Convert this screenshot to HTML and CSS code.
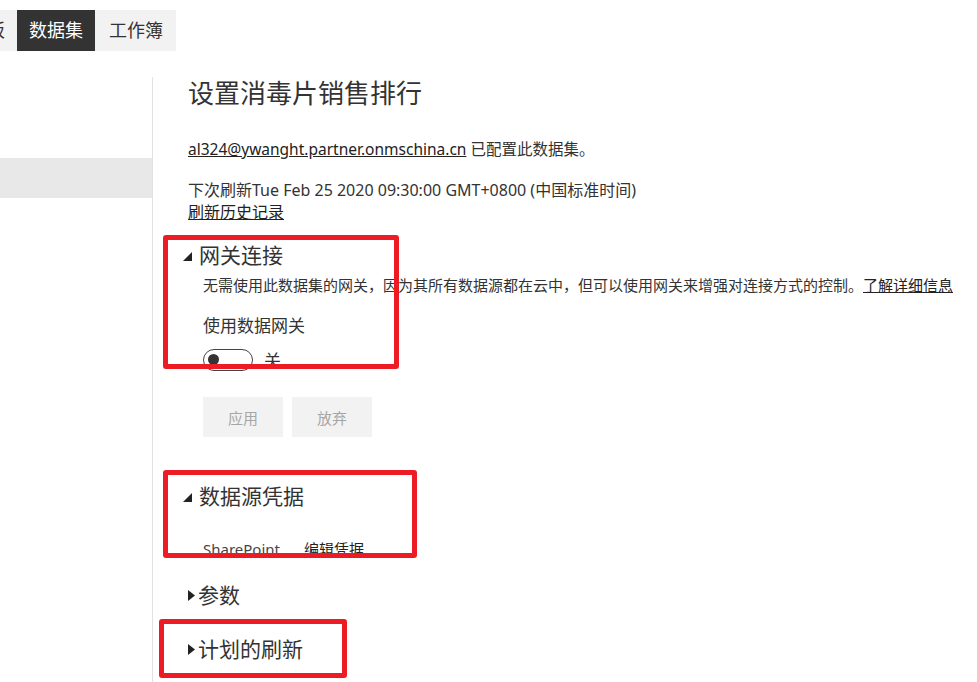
FILE: index.html
```html
<!DOCTYPE html>
<html lang="zh-CN">
<head>
    <meta charset="UTF-8">
    <meta name="viewport" content="width=device-width, initial-scale=1.0">
    <title>设置消毒片销售排行</title>
    <link rel="stylesheet" href="styles.css">
</head>
<body>
    <div class="tabs">
        <div class="tab tab-cut">仪表板</div>
        <div class="tab active">数据集</div>
        <div class="tab">工作簿</div>
    </div>
    <div class="main">
        <div class="sidebar">
            <div class="side-item selected"></div>
        </div>
        <div class="content">
            <h1 class="title">设置消毒片销售排行</h1>
            <p class="owner"><a href="#">al324@ywanght.partner.onmschina.cn</a> 已配置此数据集。</p>
            <p class="next-refresh">下次刷新Tue Feb 25 2020 09:30:00 GMT+0800 (中国标准时间)</p>
            <a class="history" href="#">刷新历史记录</a>

            <div class="section gateway">
                <div class="section-head">
                    <svg class="tri-open" width="9" height="9" viewBox="0 0 9 9"><polygon points="9,0 9,9 0,9" fill="#222"/></svg>
                    <span>网关连接</span>
                </div>
                <div class="section-body">
                    <p class="desc">无需使用此数据集的网关，因为其所有数据源都在云中，但可以使用网关来增强对连接方式的控制。<a href="#">了解详细信息</a></p>
                    <div class="label">使用数据网关</div>
                    <div class="toggle-row">
                        <span class="toggle"><span class="knob"></span></span>
                        <span class="toggle-text">关</span>
                    </div>
                    <div class="buttons">
                        <button class="btn" disabled>应用</button>
                        <button class="btn" disabled>放弃</button>
                    </div>
                </div>
            </div>

            <div class="section creds">
                <div class="section-head">
                    <svg class="tri-open" width="9" height="9" viewBox="0 0 9 9"><polygon points="9,0 9,9 0,9" fill="#222"/></svg>
                    <span>数据源凭据</span>
                </div>
                <div class="section-body">
                    <div class="cred-row">
                        <span class="cred-name">SharePoint</span>
                        <a href="#">编辑凭据</a>
                    </div>
                </div>
            </div>

            <div class="section params">
                <div class="section-head">
                    <svg class="tri-closed" width="7" height="11" viewBox="0 0 7 11"><polygon points="0,0 7,5.5 0,11" fill="#222"/></svg>
                    <span>参数</span>
                </div>
            </div>

            <div class="section schedule">
                <div class="section-head">
                    <svg class="tri-closed" width="7" height="11" viewBox="0 0 7 11"><polygon points="0,0 7,5.5 0,11" fill="#222"/></svg>
                    <span>计划的刷新</span>
                </div>
            </div>
        </div>
    </div>

    <div class="mark mark-gateway"></div>
    <div class="mark mark-creds"></div>
    <div class="mark mark-schedule"></div>
</body>
</html>
```

FILE: styles.css
```css
body {
    margin: 0;
    font-family: "Noto Sans", "Noto Sans CJK SC", sans-serif;
    color: #333;
    background-color: white;
    overflow: hidden;
}
a {
    color: #222;
    text-decoration: underline;
}
p {
    margin: 0;
}
.tabs {
    display: flex;
    padding-top: 10px;
    overflow: hidden;
}
.tab {
    height: 41px;
    line-height: 41px;
    padding: 0 12px;
    font-size: 18px;
    background-color: #f2f2f2;
    color: #333;
}
.tab-cut {
    margin-left: -61px;
}
.tab.active {
    background-color: #333;
    color: white;
}
.tab:last-child {
    padding: 0 13px 0 14px;
}
.main {
    display: flex;
    margin-top: 26px;
    min-height: 605px;
}
.sidebar {
    width: 152px;
    border-right: 1px solid #e1e1e1;
    flex-shrink: 0;
}
.side-item {
    height: 40px;
}
.side-item.selected {
    margin-top: 81px;
    background-color: #e8e8e8;
}
.content {
    padding-left: 35px;
    font-size: 15px;
}
.title {
    margin: 0;
    font-size: 26px;
    line-height: 32px;
    font-weight: normal;
    color: #333;
}
.owner {
    margin-top: 29px;
    line-height: 22px;
    font-size: 15.5px;
}
.next-refresh {
    margin-top: 19px;
    line-height: 22px;
    font-size: 16px;
}
.history {
    display: inline-block;
    line-height: 22px;
    font-size: 16px;
}
.section-head {
    display: flex;
    align-items: center;
    font-size: 21px;
    line-height: 28px;
    color: #333;
}
.tri-open {
    margin-left: -5px;
    margin-right: 7px;
    margin-top: 2px;
}
.tri-closed {
    margin-right: 3px;
}
.section-body {
    padding-left: 15px;
}
.gateway {
    margin-top: 18px;
}
.desc {
    margin-top: 5px;
    line-height: 22px;
    white-space: nowrap;
}
.label {
    margin-top: 18px;
    font-size: 17px;
    line-height: 24px;
}
.toggle-row {
    display: flex;
    align-items: center;
    gap: 11px;
    margin-top: 9px;
}
.toggle {
    display: flex;
    align-items: center;
    width: 48px;
    height: 20px;
    border: 1px solid #444;
    border-radius: 11px;
}
.knob {
    width: 11px;
    height: 11px;
    margin-left: 4px;
    border-radius: 50%;
    background-color: #333;
}
.toggle-text {
    font-size: 17px;
}
.buttons {
    display: flex;
    gap: 9px;
    margin-top: 25px;
}
.btn {
    width: 80px;
    height: 40px;
    border: none;
    background-color: #f2f2f2;
    color: #a6a6a6;
    font-family: inherit;
    font-size: 15px;
    padding: 0;
}
.creds {
    margin-top: 45px;
}
.cred-row {
    display: flex;
    gap: 24px;
    margin-top: 28px;
    line-height: 22px;
    color: #444;
}
.params {
    margin-top: 21px;
}
.schedule {
    margin-top: 26px;
}
.mark {
    position: absolute;
    border: 5px solid #ed1c24;
    border-radius: 3px;
    box-sizing: border-box;
}
.mark-gateway {
    left: 163px;
    top: 235px;
    width: 236px;
    height: 134px;
}
.mark-creds {
    left: 163px;
    top: 470px;
    width: 254px;
    height: 88px;
}
.mark-schedule {
    left: 159px;
    top: 619px;
    width: 188px;
    height: 59px;
}
```
